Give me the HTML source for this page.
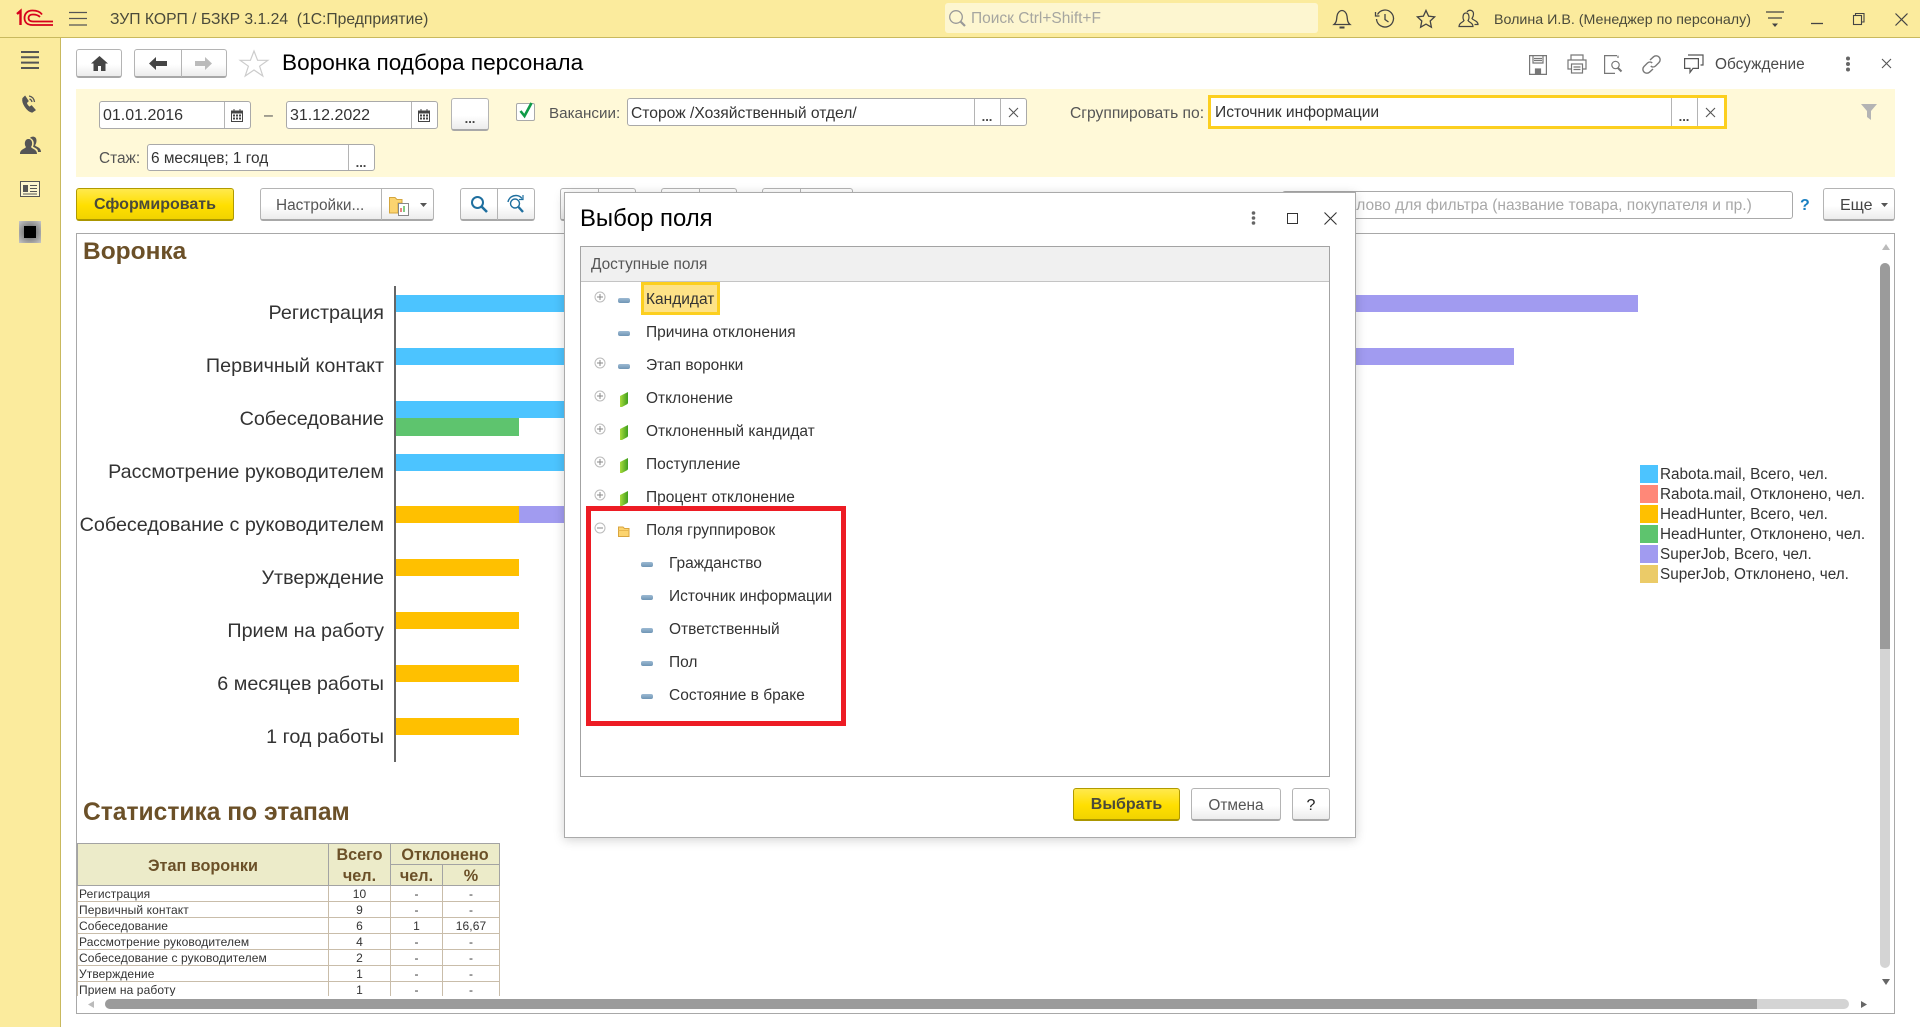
<!DOCTYPE html>
<html lang="ru"><head><meta charset="utf-8"><title>Воронка подбора персонала</title>
<style>
html,body{margin:0;padding:0;width:1920px;height:1027px;overflow:hidden;background:#fff;font-family:"Liberation Sans",Arial,sans-serif;color:#333}
.a{position:absolute;box-sizing:border-box}
.t{position:absolute;white-space:nowrap;line-height:20px;height:20px;font-size:16px;margin-top:1px}
.r{margin-top:2px;font-size:15.5px}
.btn{position:absolute;box-sizing:border-box;border:1px solid #b4b4b4;border-bottom:2px solid #a8a8a8;border-radius:3px;background:linear-gradient(#fff,#fff 55%,#ececec)}
.sep{position:absolute;width:1px;background:#b4b4b4}
.fld{position:absolute;box-sizing:border-box;border:1px solid #a9a9a9;border-radius:3px;background:#fff}
.y{position:absolute;box-sizing:border-box;border:1px solid #b09a00;border-bottom:2px solid #ab9600;border-radius:3px;background:linear-gradient(#ffe94d,#ffdf00 55%,#f1d300);font-weight:bold;font-size:16px;text-align:center;color:#4a4a3a}
.bar{position:absolute;height:17px}
.lbl{position:absolute;right:1536px;white-space:nowrap;font-size:19.75px;line-height:24px;color:#333}
.leg{position:absolute;left:1640px;width:18px;height:18px}
.lt{position:absolute;left:1660px;font-size:15.3px;line-height:18px;color:#333;white-space:nowrap;margin-top:1px}
svg{position:absolute;overflow:visible}
.dash{position:absolute;width:12px;height:5px;border-radius:2px;background:linear-gradient(#9dbad3,#6f95b5)}
table{border-collapse:collapse;table-layout:fixed;width:423px}
td{border:1px solid #c9bdaa;height:13px;padding:2px 0 0;font-size:12px;line-height:13px;text-align:center;color:#333;letter-spacing:.1px;overflow:hidden;white-space:nowrap}
td:first-child{text-align:left;padding-left:1px}
th{border:1px solid #a3a3a3;background:#ecebc9;color:#6b5028;font-size:16.2px;font-weight:bold;padding:2px 0 0;line-height:18px;height:18px}
</style></head><body>

<!-- Header -->
<div class="a" style="left:0;top:0;width:1920px;height:38px;background:#fbeb9d;border-bottom:1px solid #c9b95e"></div>
<div class="a" style="left:0;top:38px;width:61px;height:989px;background:#fbeb9d;border-right:1px solid #c9b95e"></div>

<svg style="left:16px;top:9px" width="38" height="19" viewBox="0 0 38 19" fill="none" stroke="#d6001c">
<path d="M1 5 L4.5 2 V16" stroke-width="2.4"/><path d="M26 5.5 C24 2.5 20 1.5 16.5 1.5 C11 1.5 8.5 5 8.5 9 C8.5 13 11 16 16.5 16 H37" stroke-width="1.8"/><path d="M24 8 C22 6 20 5.5 17 5.5 C14 5.5 12.5 7 12.5 9 C12.5 11 14 12.5 17 12.5 H37" stroke-width="1.8"/>
</svg>
<svg style="left:69px;top:11px" width="18" height="16" fill="none" stroke="#555" stroke-width="1.3"><path d="M0 1.5H18M0 7.5H18M0 14H18"/></svg>
<div class="t" style="left:110px;top:9px;font-size:15.7px;color:#4a4a3a">ЗУП КОРП / БЗКР 3.1.24 &nbsp;(1С:Предприятие)</div>

<div class="a" style="left:945px;top:3px;width:373px;height:30px;background:#fdf6d0;border-radius:3px"></div>
<svg style="left:949px;top:10px" width="18" height="18" fill="none" stroke="#999" stroke-width="1.3"><circle cx="7" cy="7" r="6.3"/><path d="M11.5 11.5L16 16" stroke-width="2.2"/></svg>
<div class="t" style="left:971px;top:8px;font-size:15.5px;color:#a6a6a0">Поиск Ctrl+Shift+F</div>

<svg style="left:1333px;top:9px" width="18" height="20" fill="none" stroke="#444" stroke-width="1.3"><path d="M1 15.5 C4 13 3.5 10 4 7 C4.5 3.5 7 1.5 9 1.5 C11 1.5 13.5 3.5 14 7 C14.5 10 14 13 17 15.5Z"/><path d="M6.5 18.5H11.5" stroke-width="2"/></svg>
<svg style="left:1375px;top:9px" width="20" height="20" fill="none" stroke="#444" stroke-width="1.3"><path d="M2.5 5.5A8.5 8.5 0 1 1 1.5 10"/><path d="M0.5 3V7H4.5"/><path d="M10 5V10.5L13.5 13"/></svg>
<svg style="left:1416px;top:9px" width="20" height="20" fill="none" stroke="#444" stroke-width="1.3"><path d="M10 1.5L12.6 7.2L18.6 7.9L14.2 12L15.4 18.2L10 15.1L4.6 18.2L5.8 12L1.4 7.9L7.4 7.2Z"/></svg>
<svg style="left:1458px;top:9px" width="21" height="20" fill="none" stroke="#444" stroke-width="1.2"><path d="M1 17.5C1 13.5 5 13.5 6 11.5C4.5 9.5 4.5 4 8 4C11.5 4 11.5 9.5 10 11.5C11 13.5 15 13.5 15 17.5Z"/><path d="M9 3C11 0 15.5 1 15.5 5C15.5 7 15 8 14 9.5C15 11.5 20 11.5 20 15.5H16.5"/></svg>
<div class="t" style="left:1494px;top:9px;font-size:14.25px;color:#4a4a3a">Волина И.В. (Менеджер по персоналу)</div>
<svg style="left:1766px;top:11px" width="18" height="18" fill="#444" stroke="#444" stroke-width="1.2"><path d="M0 1H18M2 7H16" fill="none"/><path d="M6 12.5H12L9 16Z" stroke="none"/></svg>
<svg style="left:1811px;top:22px" width="13" height="3"><path d="M0 1.5H12" stroke="#444" stroke-width="1.3"/></svg>
<svg style="left:1853px;top:13px" width="12" height="12" fill="none" stroke="#444" stroke-width="1.1"><rect x=".5" y="2.5" width="8" height="9"/><path d="M2.5 2.5V.5H11V9H8.5"/></svg>
<svg style="left:1895px;top:13px" width="13" height="13" fill="none" stroke="#444" stroke-width="1.2"><path d="M.5.5L12.5 12.5M12.5.5L.5 12.5"/></svg>

<!-- Sidebar icons -->
<svg style="left:21px;top:51px" width="18" height="18" stroke="#555" stroke-width="2" fill="none"><path d="M0 1H18M0 6.3H18M0 11.6H18M0 17H18"/></svg>
<svg style="left:21px;top:95px" width="16" height="18" fill="none" stroke="#555" stroke-width="1.3"><path d="M4 1.5L7 6L5.2 7.8C5.5 9.5 7 11.3 8.5 12.4L10.5 11L14 15L11 17C6 16 1 8 2 3.5Z" fill="#555"/><path d="M8 1C11 1.5 13 3.5 13.5 7M8.5 4C10 4.5 10.7 5.5 11 7"/></svg>
<svg style="left:20px;top:136px" width="21" height="18" fill="#555"><path d="M0 18C0 13 5 13 6 11C4 8.5 4.5 3 8.5 3C12.5 3 13 8.5 11 11C12 13 17 13 17 18Z"/><path d="M10 2C11 0 16.5-.5 16.5 4.5C16.5 6.5 16 8 15 9.2C16 11 21 11 21 16H18C18 12 14 12 13 10.5C14.5 7.5 14 3.5 10 2Z"/></svg>
<svg style="left:20px;top:181px" width="20" height="16" fill="none" stroke="#555"><rect x=".5" y=".5" width="19" height="15" fill="#fdf6d0"/><rect x="3" y="4" width="5" height="7" fill="#555" stroke="none"/><path d="M10 4.5H17M10 7.5H17M10 10.5H17M3 13H17"/></svg>
<div class="a" style="left:19px;top:221px;width:22px;height:22px;background:radial-gradient(#555,#c8c8c8)"></div>
<div class="a" style="left:24px;top:226px;width:12px;height:12px;background:#000"></div>

<!-- Title row -->
<div class="btn" style="left:76px;top:49px;width:46px;height:29px"></div>
<svg style="left:91px;top:56px" width="17" height="15" fill="#444"><path d="M8.5 0L17 7.5H14.5V15H10V10H7V15H2.5V7.5H0Z"/></svg>
<div class="btn" style="left:134px;top:49px;width:93px;height:29px"></div><div class="sep" style="left:181px;top:49px;height:28px"></div>
<svg style="left:149px;top:57px" width="18" height="13" fill="#444"><path d="M0 6.5L7 0V4H18V9H7V13Z"/></svg>
<svg style="left:195px;top:57px" width="17" height="13" fill="#bbb"><path d="M17 6.5L10 0V4H0V9H10V13Z"/></svg>
<svg style="left:239px;top:50px" width="30" height="27" fill="none" stroke="#ccc" stroke-width="1.2"><path d="M15 1L18.6 10.3H28.8L20.6 16.2L23.8 26L15 20L6.2 26L9.4 16.2L1.2 10.3H11.4Z"/></svg>
<div class="t" style="left:282px;top:50px;font-size:22.6px;line-height:24px;height:24px;color:#000">Воронка подбора персонала</div>

<svg style="left:1529px;top:55px" width="18" height="20" fill="none" stroke="#777" stroke-width="1.2"><path d="M.6.6H17.4V19.4H.6Z"/><path d="M4 .6V8H14V.6"/><rect x="6.5" y="14" width="5" height="5" fill="#777"/><path d="M5 3.5H13M5 5.5H13"/></svg>
<svg style="left:1567px;top:54px" width="20" height="20" fill="none" stroke="#777" stroke-width="1.2"><path d="M4 6V1H16V6M4 15H1V6H19V15H16"/><rect x="4.5" y="10" width="11" height="9"/><path d="M6.5 13H13.5M6.5 15.5H13.5"/></svg>
<svg style="left:1604px;top:55px" width="19" height="19" fill="none" stroke="#777" stroke-width="1.2"><path d="M13 .6H.6V18.4H11M14 .6V3"/><circle cx="11.5" cy="10" r="3.7"/><path d="M14 13L17.5 16.5" stroke-width="2"/></svg>
<svg style="left:1642px;top:55px" width="19" height="19" fill="none" stroke="#777" stroke-width="1.4"><path d="M8 5L11.5 1.8C13 .5 15.5.5 17 2C18.5 3.5 18.5 6 17 7.5L13.5 11C12 12.3 10 12.3 8.8 11"/><path d="M11 14L7.5 17.2C6 18.5 3.5 18.5 2 17C.5 15.5.5 13 2 11.5L5.5 8C7 6.7 9 6.7 10.2 8"/></svg>
<svg style="left:1684px;top:54px" width="20" height="20" fill="none" stroke="#555" stroke-width="1.2"><path d="M.6 4.6H14.4V14.4H9L6 18.4V14.4H.6Z"/><path d="M4 1H19V11H16.5"/></svg>
<div class="t" style="left:1715px;top:54px;font-size:15.4px;color:#4a4a4a">Обсуждение</div>
<svg style="left:1845px;top:56px" width="6" height="16" fill="#666"><circle cx="3" cy="2.5" r="2"/><circle cx="3" cy="8" r="2"/><circle cx="3" cy="13.5" r="2"/></svg>
<svg style="left:1882px;top:59px" width="9" height="9" fill="none" stroke="#555" stroke-width="1.1"><path d="M0 0L9 9M9 0L0 9"/></svg>

<!-- Filter panel -->
<div class="a" style="left:76px;top:89px;width:1819px;height:88px;background:#fff9d8"></div>
<div class="fld" style="left:99px;top:101px;width:152px;height:28px"></div><div class="sep" style="left:224px;top:102px;height:26px"></div>
<div class="t" style="left:103px;top:105px;color:#333">01.01.2016</div>
<svg style="left:231px;top:109px" width="12" height="13" fill="#444"><path d="M0 1.5H2.5V0H3.5V1.5H8.5V0H9.5V1.5H12V13H0ZM1 4.5V12H11V4.5Z" fill-rule="evenodd"/><path d="M2 5.5h2v2H2zM5 5.5h2v2H5zM8 5.5h2v2H8zM2 8.5h2v2H2zM5 8.5h2v2H5zM8 8.5h2v2H8z"/></svg>
<div class="t" style="left:264px;top:105px;color:#555">–</div>
<div class="fld" style="left:286px;top:101px;width:152px;height:28px"></div><div class="sep" style="left:411px;top:102px;height:26px"></div>
<div class="t" style="left:290px;top:105px;color:#333">31.12.2022</div>
<svg style="left:418px;top:109px" width="12" height="13" fill="#444"><path d="M0 1.5H2.5V0H3.5V1.5H8.5V0H9.5V1.5H12V13H0ZM1 4.5V12H11V4.5Z" fill-rule="evenodd"/><path d="M2 5.5h2v2H2zM5 5.5h2v2H5zM8 5.5h2v2H8zM2 8.5h2v2H2zM5 8.5h2v2H5zM8 8.5h2v2H8z"/></svg>
<div class="btn" style="left:451px;top:98px;width:38px;height:33px"></div>
<div class="t" style="left:451px;top:108px;width:38px;text-align:center;font-weight:bold;font-size:13px;color:#444">...</div>
<div class="a" style="left:516px;top:103px;width:19px;height:18px;border:1px solid #a9a9a9;border-radius:2px;background:#fff"></div>
<svg style="left:519px;top:102px" width="14" height="16" fill="none" stroke="#0f9b48" stroke-width="2.6"><path d="M1.5 9L5.5 14L12.5 1"/></svg>
<div class="t" style="left:549px;top:103px;font-size:15.2px;color:#555">Вакансии:</div>
<div class="fld" style="left:627px;top:98px;width:400px;height:28px"></div>
<div class="sep" style="left:974px;top:99px;height:26px"></div><div class="sep" style="left:1000px;top:99px;height:26px"></div>
<div class="t" style="left:631px;top:103px;font-size:15.65px;color:#333">Сторож /Хозяйственный отдел/</div>
<div class="t" style="left:974px;top:106px;width:26px;text-align:center;font-weight:bold;font-size:13px;color:#444">...</div>
<svg style="left:1009px;top:108px" width="9" height="9" fill="none" stroke="#555" stroke-width="1.1"><path d="M0 0L9 9M9 0L0 9"/></svg>
<div class="t" style="left:1070px;top:103px;font-size:15.65px;color:#555">Сгруппировать по:</div>
<div class="a" style="left:1208px;top:95px;width:519px;height:34px;border:3px solid #fccf1f;background:#fff"></div>
<div class="sep" style="left:1671px;top:98px;height:28px"></div><div class="sep" style="left:1697px;top:98px;height:28px"></div>
<div class="t" style="left:1215px;top:102px;font-size:15.6px;color:#333">Источник информации</div>
<div class="t" style="left:1671px;top:106px;width:26px;text-align:center;font-weight:bold;font-size:13px;color:#444">...</div>
<svg style="left:1706px;top:108px" width="9" height="9" fill="none" stroke="#555" stroke-width="1.1"><path d="M0 0L9 9M9 0L0 9"/></svg>
<svg style="left:1861px;top:104px" width="16" height="16" fill="#b4b4b4"><path d="M0 0H16L10 7V16L6 13V7Z"/></svg>

<div class="t" style="left:99px;top:148px;font-size:15.4px;color:#555">Стаж:</div>
<div class="fld" style="left:147px;top:144px;width:228px;height:27px"></div><div class="sep" style="left:348px;top:145px;height:25px"></div>
<div class="t" style="left:151px;top:148px;font-size:15.4px;color:#333">6 месяцев; 1 год</div>
<div class="t" style="left:348px;top:152px;width:26px;text-align:center;font-weight:bold;font-size:13px;color:#444">...</div>

<!-- Toolbar -->
<div class="y" style="left:76px;top:188px;width:158px;height:33px;line-height:32px">Сформировать</div>
<div class="btn" style="left:260px;top:188px;width:174px;height:33px"></div><div class="sep" style="left:381px;top:189px;height:31px"></div>
<div class="t" style="left:276px;top:195px;font-size:15.4px;color:#555">Настройки...</div>
<svg style="left:389px;top:195px" width="22" height="21" fill="none"><path d="M.5 2.5H6L8 4.5H13V8H9V18H.5Z" fill="#fcd46f" stroke="#d4a63e"/><rect x="9.5" y="8.5" width="10" height="12" fill="#fff" stroke="#888"/><path d="M12 17V13" stroke="#d33" stroke-width="1.2"/><path d="M15 17V11" stroke="#3a3" stroke-width="1.2"/></svg>
<svg style="left:420px;top:203px" width="7" height="4" fill="#555"><path d="M0 0H7L3.5 4Z"/></svg>
<div class="btn" style="left:460px;top:188px;width:75px;height:33px"></div><div class="sep" style="left:497px;top:189px;height:31px"></div>
<svg style="left:470px;top:195px" width="18" height="18" fill="none" stroke="#1f6f9f" stroke-width="2"><circle cx="7.5" cy="7.5" r="5.5"/><path d="M11.5 11.5L17 17" stroke-width="2.6"/></svg>
<svg style="left:506px;top:194px" width="19" height="20" fill="none" stroke="#1f6f9f" stroke-width="1.4"><circle cx="9" cy="9.5" r="4.5"/><path d="M12.5 13L17 18" stroke-width="2.4"/><path d="M2 8C3 3 7 1.5 10 1.5C12.5 1.5 14.5 2.5 16 4.5"/><path d="M17 1V5.5H13" stroke-width="1.2"/></svg>
<div class="btn" style="left:560px;top:188px;width:76px;height:33px"></div><div class="sep" style="left:598px;top:189px;height:31px"></div>
<div class="btn" style="left:661px;top:188px;width:76px;height:33px"></div><div class="sep" style="left:699px;top:189px;height:31px"></div>
<div class="btn" style="left:762px;top:188px;width:91px;height:33px"></div><div class="sep" style="left:800px;top:189px;height:31px"></div>

<div class="fld" style="left:1282px;top:191px;width:511px;height:28px"></div>
<div class="t" style="left:1284px;top:195px;font-size:15.55px;color:#a8a8a8">Введите слово для фильтра (название товара, покупателя и пр.)</div>
<div class="t" style="left:1800px;top:195px;font-weight:bold;color:#1a7fc1">?</div>
<div class="btn" style="left:1823px;top:188px;width:72px;height:33px"></div>
<div class="t" style="left:1840px;top:195px;color:#444">Еще</div>
<svg style="left:1881px;top:203px" width="7" height="4" fill="#555"><path d="M0 0H7L3.5 4Z"/></svg>

<!-- Report -->
<div class="a" style="left:76px;top:233px;width:1819px;height:781px;border:1px solid #a8a8a8;background:#fff"></div>
<div class="t" style="left:83px;top:238px;height:26px;line-height:26px;font-size:24.5px;font-weight:bold;color:#6b5028">Воронка</div>

<div class="a" style="left:394px;top:286px;width:2px;height:476px;background:#666"></div>
<div class="lbl" style="top:301px">Регистрация</div>
<div class="lbl" style="top:354px">Первичный контакт</div>
<div class="lbl" style="top:407px">Собеседование</div>
<div class="lbl" style="top:460px">Рассмотрение руководителем</div>
<div class="lbl" style="top:513px">Собеседование с руководителем</div>
<div class="lbl" style="top:566px">Утверждение</div>
<div class="lbl" style="top:619px">Прием на работу</div>
<div class="lbl" style="top:672px">6 месяцев работы</div>
<div class="lbl" style="top:725px">1 год работы</div>

<div class="bar" style="left:396px;top:295px;width:1242px;background:#a19bf0"></div>
<div class="bar" style="left:396px;top:295px;width:500px;background:#4cc4ff"></div>
<div class="bar" style="left:396px;top:348px;width:1118px;background:#a19bf0"></div>
<div class="bar" style="left:396px;top:348px;width:500px;background:#4cc4ff"></div>
<div class="bar" style="left:396px;top:401px;width:400px;background:#4cc4ff"></div>
<div class="bar" style="left:396px;top:418px;width:123px;height:18px;background:#5ec46e"></div>
<div class="bar" style="left:396px;top:454px;width:400px;background:#4cc4ff"></div>
<div class="bar" style="left:396px;top:506px;width:123px;background:#ffc000"></div>
<div class="bar" style="left:519px;top:506px;width:124px;background:#a19bf0"></div>
<div class="bar" style="left:396px;top:559px;width:123px;background:#ffc000"></div>
<div class="bar" style="left:396px;top:612px;width:123px;background:#ffc000"></div>
<div class="bar" style="left:396px;top:665px;width:123px;background:#ffc000"></div>
<div class="bar" style="left:396px;top:718px;width:123px;background:#ffc000"></div>

<div class="leg" style="top:465px;background:#4cc4ff"></div><div class="lt" style="top:465px">Rabota.mail, Всего, чел.</div>
<div class="leg" style="top:485px;background:#ff8878"></div><div class="lt" style="top:485px">Rabota.mail, Отклонено, чел.</div>
<div class="leg" style="top:505px;background:#ffc000"></div><div class="lt" style="top:505px">HeadHunter, Всего, чел.</div>
<div class="leg" style="top:525px;background:#5ec46e"></div><div class="lt" style="top:525px">HeadHunter, Отклонено, чел.</div>
<div class="leg" style="top:545px;background:#a19bf0"></div><div class="lt" style="top:545px">SuperJob, Всего, чел.</div>
<div class="leg" style="top:565px;background:#ebcb68"></div><div class="lt" style="top:565px">SuperJob, Отклонено, чел.</div>

<div class="t" style="left:83px;top:799px;height:26px;line-height:26px;font-size:24.6px;font-weight:bold;color:#6b5028">Статистика по этапам</div>

<div class="a" style="left:77px;top:843px;width:424px;height:153px;overflow:hidden">
<table><colgroup><col style="width:251px"><col style="width:62px"><col style="width:52px"><col style="width:57px"></colgroup>
<tr><th rowspan="2">Этап воронки</th><th style="border-bottom:0">Всего</th><th colspan="2">Отклонено</th></tr>
<tr><th style="border-top:0">чел.</th><th>чел.</th><th>%</th></tr>
<tr><td>Регистрация</td><td>10</td><td>-</td><td>-</td></tr>
<tr><td>Первичный контакт</td><td>9</td><td>-</td><td>-</td></tr>
<tr><td>Собеседование</td><td>6</td><td>1</td><td>16,67</td></tr>
<tr><td>Рассмотрение руководителем</td><td>4</td><td>-</td><td>-</td></tr>
<tr><td>Собеседование с руководителем</td><td>2</td><td>-</td><td>-</td></tr>
<tr><td>Утверждение</td><td>1</td><td>-</td><td>-</td></tr>
<tr><td>Прием на работу</td><td>1</td><td>-</td><td>-</td></tr>
</table></div>

<!-- Scrollbars -->
<div class="a" style="left:1880px;top:263px;width:10px;height:705px;border-radius:5px;background:#d4d4d4"></div>
<div class="a" style="left:1880px;top:263px;width:10px;height:386px;border-radius:5px 5px 0 0;background:#9b9b9b"></div>
<svg style="left:1882px;top:244px" width="8" height="6" fill="#bbb"><path d="M4 0L8 6H0Z"/></svg>
<svg style="left:1882px;top:979px" width="8" height="6" fill="#666"><path d="M4 6L8 0H0Z"/></svg>
<div class="a" style="left:105px;top:999px;width:1744px;height:10px;border-radius:5px;background:#d4d4d4"></div>
<div class="a" style="left:105px;top:999px;width:1652px;height:10px;border-radius:5px 0 0 5px;background:#9b9b9b"></div>
<svg style="left:88px;top:1001px" width="6" height="7" fill="#bbb"><path d="M0 3.5L6 0V7Z"/></svg>
<svg style="left:1861px;top:1001px" width="6" height="7" fill="#666"><path d="M6 3.5L0 0V7Z"/></svg>

<!-- Dialog -->
<div class="a" style="left:564px;top:192px;width:792px;height:646px;background:#fff;border:1px solid #aaa;box-shadow:0 2px 10px rgba(0,0,0,.18)"></div>
<div class="t" style="left:580px;top:204px;height:28px;line-height:28px;font-size:23.9px;color:#000;margin-top:1px">Выбор поля</div>
<svg style="left:1251px;top:210px" width="5" height="16" fill="#666"><circle cx="2.5" cy="3" r="1.8"/><circle cx="2.5" cy="8" r="1.8"/><circle cx="2.5" cy="13" r="1.8"/></svg>
<div class="a" style="left:1287px;top:213px;width:11px;height:11px;border:1px solid #333"></div>
<svg style="left:1324px;top:212px" width="13" height="13" fill="none" stroke="#333" stroke-width="1.1"><path d="M.5.5L12.5 12.5M12.5.5L.5 12.5"/></svg>

<div class="a" style="left:580px;top:246px;width:750px;height:531px;border:1px solid #a3a3a3;background:#fff"></div>
<div class="a" style="left:581px;top:247px;width:748px;height:35px;background:#f0f0f0;border-bottom:1px solid #c4c4c4"></div>
<div class="t" style="left:591px;top:254px;font-size:15.4px;color:#555">Доступные поля</div>

<div class="a" style="left:641px;top:282px;width:79px;height:33px;border:3px solid #fccf1f;background:#fde287"></div>

<svg width="0" height="0"><defs>
<g id="pl"><circle cx="6" cy="6" r="5" fill="#fff" stroke="#bbb"/><path d="M3 6H9M6 3V9" stroke="#888" fill="none"/></g>
<g id="mn"><circle cx="6" cy="6" r="5" fill="#fff" stroke="#bbb"/><path d="M3 6H9" stroke="#888" fill="none"/></g>
<linearGradient id="gr" x1="0" x2="1" y1="0" y2="0"><stop offset="0" stop-color="#a8dc3c"/><stop offset="1" stop-color="#3f9e1e"/></linearGradient>
<g id="gn"><path d="M0 4L8 0V11L7.5 12L2 15H0Z" fill="url(#gr)"/></g>
</defs></svg>

<svg style="left:594px;top:291px" width="12" height="12"><use href="#pl"/></svg><div class="dash" style="left:618px;top:298px"></div>
<div class="t r" style="left:646px;top:288px">Кандидат</div>
<div class="dash" style="left:618px;top:331px"></div>
<div class="t r" style="left:646px;top:321px">Причина отклонения</div>
<svg style="left:594px;top:357px" width="12" height="12"><use href="#pl"/></svg><div class="dash" style="left:618px;top:364px"></div>
<div class="t r" style="left:646px;top:354px">Этап воронки</div>
<svg style="left:594px;top:390px" width="12" height="12"><use href="#pl"/></svg><svg style="left:620px;top:392px" width="9" height="15"><use href="#gn"/></svg>
<div class="t r" style="left:646px;top:387px">Отклонение</div>
<svg style="left:594px;top:423px" width="12" height="12"><use href="#pl"/></svg><svg style="left:620px;top:425px" width="9" height="15"><use href="#gn"/></svg>
<div class="t r" style="left:646px;top:420px">Отклоненный кандидат</div>
<svg style="left:594px;top:456px" width="12" height="12"><use href="#pl"/></svg><svg style="left:620px;top:458px" width="9" height="15"><use href="#gn"/></svg>
<div class="t r" style="left:646px;top:453px">Поступление</div>
<svg style="left:594px;top:489px" width="12" height="12"><use href="#pl"/></svg><svg style="left:620px;top:491px" width="9" height="15"><use href="#gn"/></svg>
<div class="t r" style="left:646px;top:486px">Процент отклонение</div>
<svg style="left:594px;top:522px" width="12" height="12"><use href="#mn"/></svg>
<svg style="left:618px;top:526px" width="12" height="11"><path d="M.5 1H5L6.5 2.5H11V10.5H.5Z" fill="#fcd46f" stroke="#d9a53f"/><path d="M.5 4.5H11" stroke="#e8b850"/></svg>
<div class="t r" style="left:646px;top:519px">Поля группировок</div>
<div class="dash" style="left:641px;top:562px"></div><div class="t r" style="left:669px;top:552px">Гражданство</div>
<div class="dash" style="left:641px;top:595px"></div><div class="t r" style="left:669px;top:585px">Источник информации</div>
<div class="dash" style="left:641px;top:628px"></div><div class="t r" style="left:669px;top:618px">Ответственный</div>
<div class="dash" style="left:641px;top:661px"></div><div class="t r" style="left:669px;top:651px">Пол</div>
<div class="dash" style="left:641px;top:694px"></div><div class="t r" style="left:669px;top:684px">Состояние в браке</div>

<div class="a" style="left:586px;top:506px;width:260px;height:220px;border:5px solid #ed1c24"></div>

<div class="y" style="left:1073px;top:788px;width:107px;height:33px;line-height:32px">Выбрать</div>
<div class="btn" style="left:1191px;top:788px;width:90px;height:33px"></div>
<div class="t" style="left:1191px;top:795px;width:90px;text-align:center;color:#555;font-size:15.4px">Отмена</div>
<div class="btn" style="left:1292px;top:788px;width:38px;height:33px"></div>
<div class="t" style="left:1292px;top:795px;width:38px;text-align:center;color:#222">?</div>

</body></html>
